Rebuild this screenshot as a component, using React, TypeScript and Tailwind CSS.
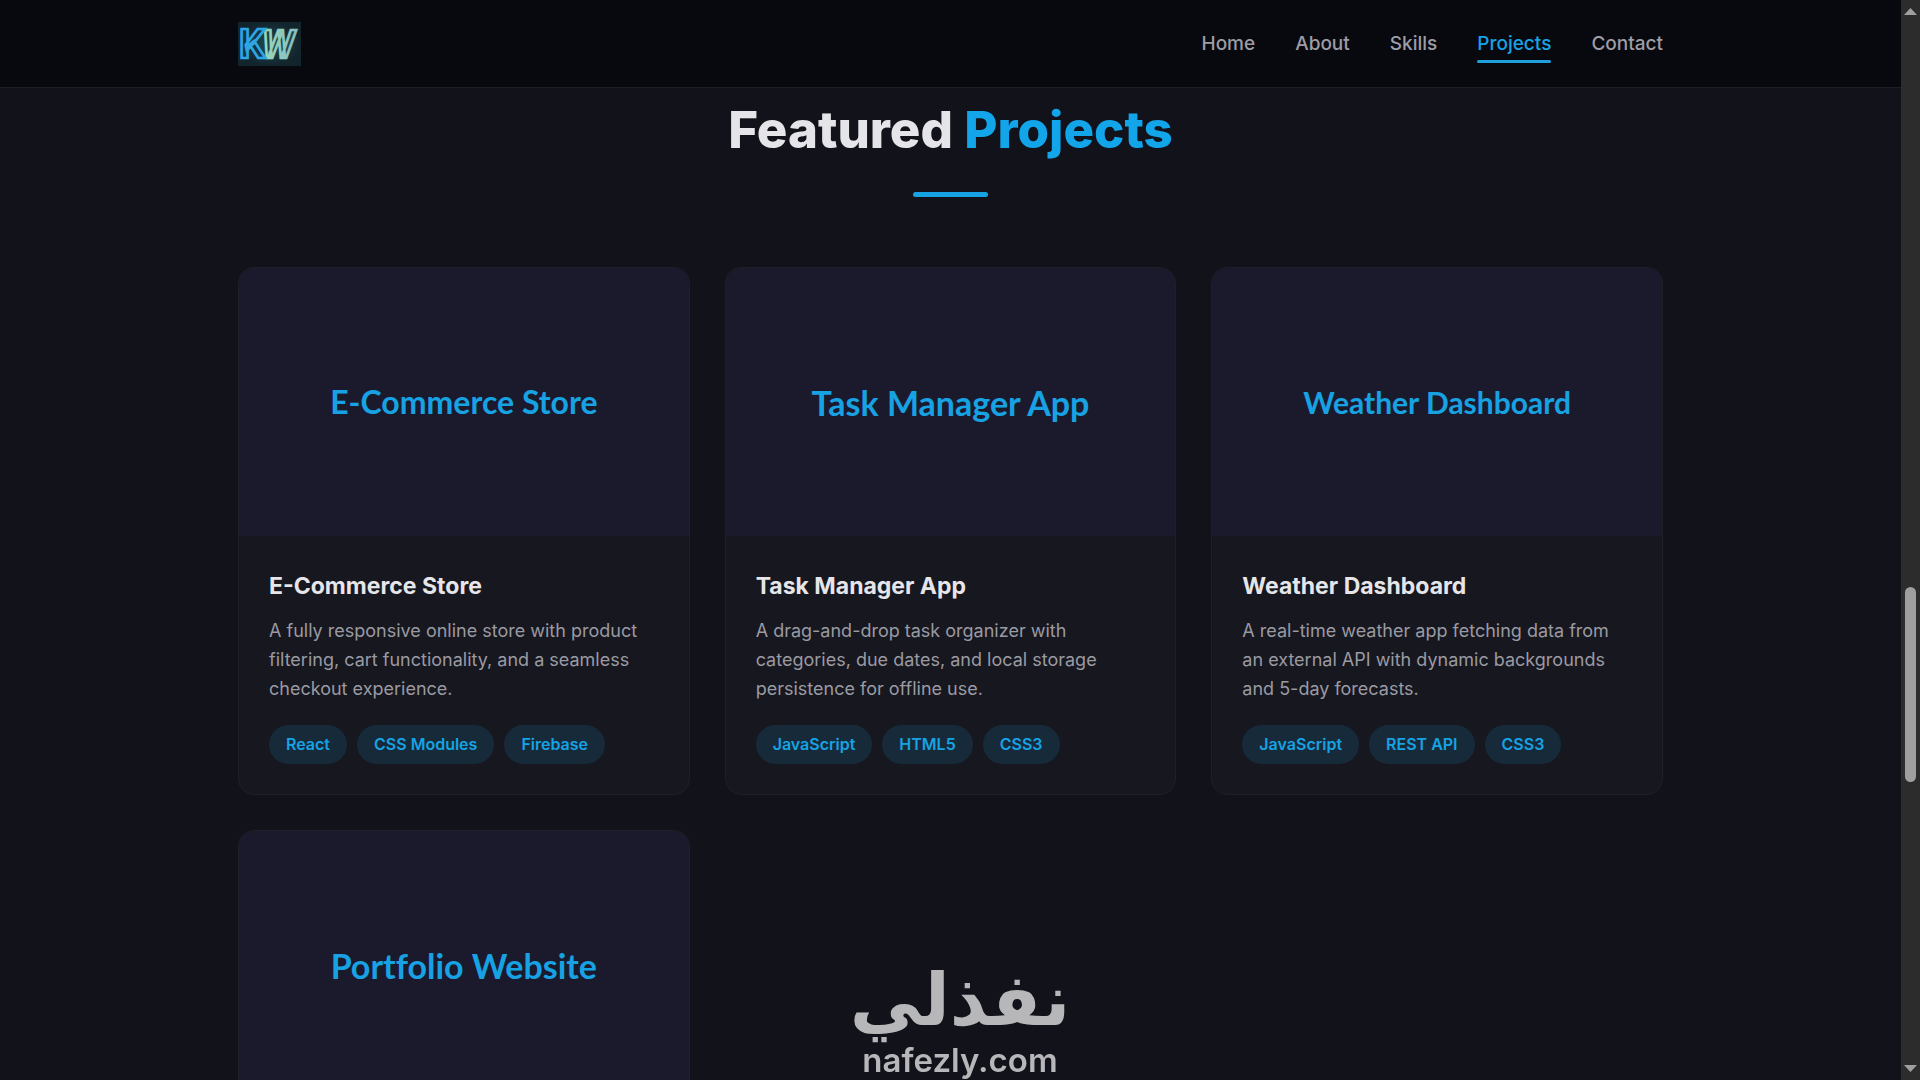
import clsx from "clsx";

type Project = {
  title: string;
  description: string;
  tags: string[];
  coverSize: string;
};

const navItems = ["Home", "About", "Skills", "Projects", "Contact"];

const projects: Project[] = [
  {
    title: "E-Commerce Store",
    description:
      "A fully responsive online store with product filtering, cart functionality, and a seamless checkout experience.",
    tags: ["React", "CSS Modules", "Firebase"],
    coverSize: "text-[32px]",
  },
  {
    title: "Task Manager App",
    description:
      "A drag-and-drop task organizer with categories, due dates, and local storage persistence for offline use.",
    tags: ["JavaScript", "HTML5", "CSS3"],
    coverSize: "text-[34px]",
  },
  {
    title: "Weather Dashboard",
    description:
      "A real-time weather app fetching data from an external API with dynamic backgrounds and 5-day forecasts.",
    tags: ["JavaScript", "REST API", "CSS3"],
    coverSize: "text-[30px]",
  },
  {
    title: "Portfolio Website",
    description: "",
    tags: [],
    coverSize: "text-[34px]",
  },
];

const Logo = () => (
  <svg viewBox="0 0 63 44" className="h-11 w-[63px] overflow-visible" role="img" aria-label="KW">
    <defs>
      <radialGradient id="logo-bg">
        <stop offset="0" stopColor="#1c4a55" />
        <stop offset="1" stopColor="#12242c" />
      </radialGradient>
      <linearGradient id="logo-w" x1="0" x2="1">
        <stop offset="0" stopColor="#9ad8b8" />
        <stop offset="1" stopColor="#86bcc0" />
      </linearGradient>
    </defs>
    <rect width="63" height="44" fill="url(#logo-bg)" />
    <g fontWeight="700" strokeWidth="2.6" strokeLinejoin="miter">
      <text
        x="24"
        y="36"
        fontSize="38"
        fontFamily="Roboto, sans-serif"
        fontStyle="italic"
        fill="#1c434c"
        stroke="url(#logo-w)"
      >
        W
      </text>
      <text
        x="1"
        y="36"
        fontSize="41"
        fontFamily="Roboto, sans-serif"
        fill="#123645"
        stroke="#2ea6e6"
      >
        K
      </text>
    </g>
  </svg>
);

const Header = () => (
  <header className="border-b border-[#1c1d25] bg-[#08080f]">
    <div className="mx-auto flex h-[87px] max-w-[1425px] items-center justify-between">
      <a href="#home">
        <Logo />
      </a>
      <nav className="flex gap-10 text-[19px] font-medium leading-7 text-[#9d9da5]">
        {navItems.map((item) => (
          <a
            key={item}
            href={`#${item.toLowerCase()}`}
            className={clsx("relative", item === "Projects" && "text-[#17a2e3]")}
          >
            {item}
            {item === "Projects" && (
              <span className="absolute inset-x-0 -bottom-[5px] h-[3px] rounded-sm bg-[#1f9fdc]" />
            )}
          </a>
        ))}
      </nav>
    </div>
  </header>
);

const ProjectCard = ({ title, description, tags, coverSize }: Project) => (
  <article className="overflow-hidden rounded-2xl border border-[#1e1f27] bg-[#17171f]">
    <div
      className={clsx(
        "flex h-[268px] items-center justify-center bg-[#1b1a2d] font-['Lato',sans-serif] font-bold text-[#17a2e3] [font-variant-ligatures:none]",
        coverSize,
      )}
    >
      {title}
    </div>
    <div className="px-[30px] pt-8 pb-[30px]">
      <h3 className="text-[23px] font-bold leading-9 text-[#e6e6ea]">{title}</h3>
      <p className="mt-3 text-lg leading-[29px] text-[#9a9aa3]">{description}</p>
      <ul className="mt-[22px] flex flex-wrap gap-[10px]">
        {tags.map((tag) => (
          <li
            key={tag}
            className="rounded-full bg-[#162a3a] px-[17px] py-2 text-base font-semibold leading-[23px] text-[#17a2e3]"
          >
            {tag}
          </li>
        ))}
      </ul>
    </div>
  </article>
);

const Watermark = () => (
  <div className="fixed bottom-0 left-1/2 flex -translate-x-1/2 flex-col items-center text-[#b7b7ba]">
    <span
      dir="rtl"
      lang="ar"
      className="font-['DejaVu_Sans',sans-serif] text-[72px] font-bold leading-[80px]"
    >
      نفذلي
    </span>
    <span className="text-[33px] font-semibold leading-10">nafezly.com</span>
  </div>
);

const Scrollbar = () => (
  <div
    aria-hidden="true"
    className="flex w-[19px] shrink-0 flex-col items-center bg-[#2c2c2c] py-2"
  >
    <svg viewBox="0 0 13 7" className="h-[7px] w-[13px]">
      <path d="M6.500 0 13 7H0z" fill="#9f9f9f" />
    </svg>
    <div className="flex w-full flex-1 flex-col items-center">
      <div className="grow-[572]" />
      <div className="w-[11px] grow-[195] rounded-full bg-[#9f9f9f]" />
      <div className="grow-[283]" />
    </div>
    <svg viewBox="0 0 13 7" className="h-[7px] w-[13px]">
      <path d="M0 0h13L6.500 7z" fill="#9f9f9f" />
    </svg>
  </div>
);

export default function App() {
  return (
    <div className="flex h-screen overflow-hidden bg-[#11121a] font-['Inter',sans-serif]">
      <div className="min-w-0 flex-1 overflow-hidden">
        <Header />
        <main className="mx-auto max-w-[1425px]">
          <h2 className="pt-2 text-center text-[51px] font-extrabold leading-[68px] text-[#e4e4e9]">
            Featured <span className="text-[#12a5ea]">Projects</span>
          </h2>
          <div className="mx-auto mt-7 h-[5px] w-[75px] rounded-full bg-[#17a2e3]" />
          <div className="mt-[70px] grid grid-cols-3 gap-[35px]">
            {projects.map((project) => (
              <ProjectCard key={project.title} {...project} />
            ))}
          </div>
        </main>
      </div>
      <Scrollbar />
      <Watermark />
    </div>
  );
}
